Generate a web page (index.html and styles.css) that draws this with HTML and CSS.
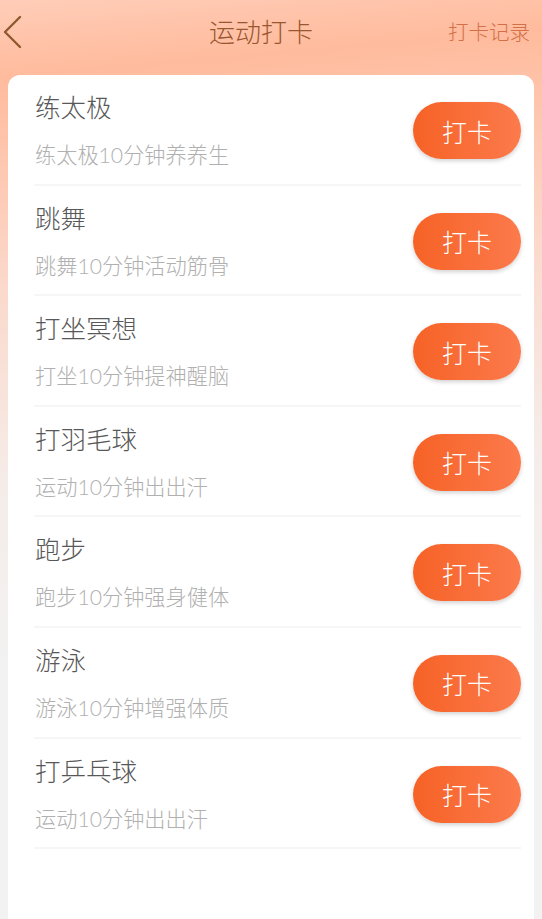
FILE: index.html
```html
<!DOCTYPE html>
<html lang="zh-CN">
<head>
<meta charset="utf-8">
<title>运动打卡</title>
<link rel="stylesheet" href="styles.css">
</head>
<body>
<div class="page">
  <header class="header">
    <div class="back">
      <svg width="24" height="36" viewBox="0 0 24 36"><polyline points="19,3 4,18 19,33" fill="none" stroke="#8e5a30" stroke-width="2.4" stroke-linecap="round" stroke-linejoin="round"/></svg>
    </div>
    <div class="title">运动打卡</div>
    <div class="record">打卡记录</div>
  </header>
  <main class="card">
    <div class="row">
      <div class="text"><div class="name">练太极</div><div class="desc">练太极10分钟养养生</div></div>
      <button class="btn">打卡</button>
    </div>
    <div class="row">
      <div class="text"><div class="name">跳舞</div><div class="desc">跳舞10分钟活动筋骨</div></div>
      <button class="btn">打卡</button>
    </div>
    <div class="row">
      <div class="text"><div class="name">打坐冥想</div><div class="desc">打坐10分钟提神醒脑</div></div>
      <button class="btn">打卡</button>
    </div>
    <div class="row">
      <div class="text"><div class="name">打羽毛球</div><div class="desc">运动10分钟出出汗</div></div>
      <button class="btn">打卡</button>
    </div>
    <div class="row">
      <div class="text"><div class="name">跑步</div><div class="desc">跑步10分钟强身健体</div></div>
      <button class="btn">打卡</button>
    </div>
    <div class="row">
      <div class="text"><div class="name">游泳</div><div class="desc">游泳10分钟增强体质</div></div>
      <button class="btn">打卡</button>
    </div>
    <div class="row">
      <div class="text"><div class="name">打乒乓球</div><div class="desc">运动10分钟出出汗</div></div>
      <button class="btn">打卡</button>
    </div>
  </main>
</div>
</body>
</html>
```
FILE: styles.css
```css
html, body {
  margin: 0;
  padding: 0;
}
body {
  font-family: Lato, "Noto Sans CJK SC", sans-serif;
  background: #f2f2f2;
}
.page {
  width: 542px;
  height: 919px;
  overflow: hidden;
  background: linear-gradient(175deg, #ffcdb8 0%, #ffbb9d 8%, #fbd9cc 30%, #f5ece8 50%, #f2f2f2 70%, #f2f2f2 100%);
}
.header {
  height: 75px;
  display: grid;
  grid-template-columns: 1fr auto 1fr;
  align-items: start;
}
.back {
  width: 24px;
  height: 36px;
  margin-top: 14px;
  margin-left: 1px;
}
.title {
  text-align: center;
  font-size: 26px;
  line-height: 32px;
  margin-top: 16px;
  margin-right: 20px;
  color: #9a5630;
  font-weight: 300;
}
.record {
  justify-self: end;
  font-size: 20.5px;
  line-height: 30px;
  margin-top: 17px;
  margin-right: 12px;
  color: #d27048;
  font-weight: 300;
}
.card {
  margin: 0 8px;
  background: #ffffff;
  border-radius: 12px 12px 0 0;
  height: 860px;
  padding: 0 13px 0 26px;
}
.row {
  height: 110.6px;
  box-sizing: border-box;
  border-bottom: 2px solid #f6f6f6;
  display: flex;
  align-items: flex-start;
  justify-content: space-between;
}
.text {
  padding-top: 16px;
  padding-left: 1px;
}
.name {
  font-size: 25.5px;
  line-height: 33px;
  color: #585858;
  font-weight: 300;
}
.desc {
  margin-top: 15px;
  font-size: 21.2px;
  line-height: 32px;
  color: #b0b0b0;
  font-weight: 300;
}
.btn {
  margin-top: 27px;
  width: 108px;
  height: 57px;
  border: none;
  border-radius: 29px;
  background: linear-gradient(90deg, #f66226 0%, #fc7a4c 100%);
  box-shadow: 0 2px 4px rgba(0, 0, 0, 0.18);
  color: #ffffff;
  font-family: Lato, "Noto Sans CJK SC", sans-serif;
  font-size: 25px;
  font-weight: 300;
  padding: 0;
}
```
